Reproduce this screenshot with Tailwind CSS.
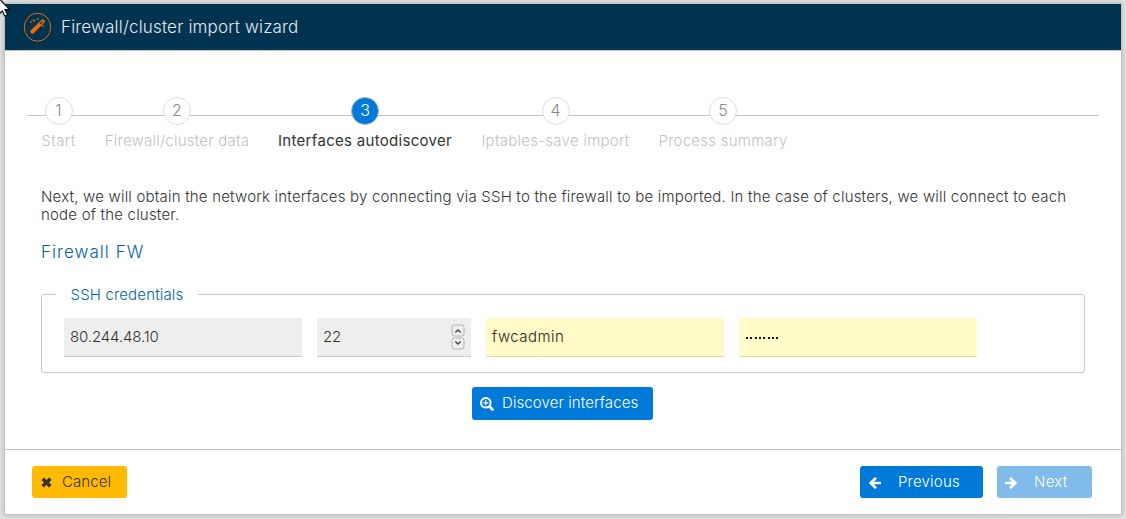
<!DOCTYPE html>
<html lang="en">
<head>
<meta charset="utf-8">
<title>Firewall/cluster import wizard</title>
<script src="https://cdn.jsdelivr.net/npm/@tailwindcss/browser@4"></script>
</head>
<body class="h-[519px] overflow-hidden bg-[#e2e2e2] pt-[3px] pl-1 font-['Inter',sans-serif] text-[15px] text-[#333]">
<div class="flex h-[512px] w-[1118px] flex-col border border-[#c2c2c2] bg-white shadow-[0_0_6px_rgba(0,0,0,0.2)]">
  <header class="flex h-[47px] shrink-0 items-center border-b border-[#c5c5c5] bg-[#003350] pl-[18px]">
    <svg class="h-[30px] w-[30px] shrink-0" viewBox="0 0 30 30" fill="none">
      <ellipse cx="14.5" cy="15.2" rx="13.2" ry="14" stroke="#e26b0c" stroke-width="1"/>
      <path d="M9.3 19.7 19.8 9.4" stroke="#ef6c00" stroke-width="4" stroke-linecap="round"/>
      <path d="m17 12 2.7-2.6" stroke="#003350" stroke-width="1.3"/>
      <path d="M11 7v3M9.5 8.5h3M14.8 6v2M13.8 7h2M8 9v2M7 10h2M20 13v2M19 14h2" stroke="#e26b0c" stroke-width=".8"/>
    </svg>
    <h1 class="ml-2 whitespace-nowrap text-[17px] leading-5 font-light tracking-[0.18px] text-[#e4e9ee]">Firewall/cluster import wizard</h1>
  </header>

  <main class="flex h-[398px] shrink-0 flex-col">
    <ol class="mx-[22px] mt-[46px] grid h-[56px] shrink-0 grid-cols-[35px_144px_174px_149px_128px] gap-x-[29px] bg-[linear-gradient(#c4c4c4,#c4c4c4)] bg-[length:100%_1px] bg-[position:0_18px] bg-no-repeat pl-[14px] text-[#c2c2c2]">
      <li class="flex flex-col items-center"><span class="flex h-7 w-7 items-center justify-center rounded-full border border-[#dedede] bg-white/90 pb-[2px] text-base font-light text-[#888]">1</span><span class="mt-[6px] whitespace-nowrap leading-5 font-light tracking-[0.4px]">Start</span></li>
      <li class="flex flex-col items-center"><span class="flex h-7 w-7 items-center justify-center rounded-full border border-[#dedede] bg-white/90 pb-[2px] text-base font-light text-[#888]">2</span><span class="mt-[6px] whitespace-nowrap leading-5 font-light tracking-[0.22px]">Firewall/cluster data</span></li>
      <li class="flex flex-col items-center"><span class="flex h-7 w-7 items-center justify-center rounded-full border border-[#a5b5c2] bg-[#007ad9] pb-[2px] text-base font-light text-white">3</span><span class="mt-[6px] whitespace-nowrap leading-5 tracking-[0.3px] text-[#333]">Interfaces autodiscover</span></li>
      <li class="flex flex-col items-center"><span class="flex h-7 w-7 items-center justify-center rounded-full border border-[#dedede] bg-white/90 pb-[2px] text-base font-light text-[#888]">4</span><span class="mt-[6px] whitespace-nowrap leading-5 font-light tracking-[0.27px]">Iptables-save import</span></li>
      <li class="flex flex-col items-center"><span class="flex h-7 w-7 items-center justify-center rounded-full border border-[#dedede] bg-white/90 pb-[2px] text-base font-light text-[#888]">5</span><span class="mt-[6px] whitespace-nowrap leading-5 font-light tracking-[0.25px]">Process summary</span></li>
    </ol>

    <p class="mt-[35px] ml-9 whitespace-nowrap leading-[18px] font-light tracking-[0.2px]">Next, we will obtain the network interfaces by connecting via SSH to the firewall to be imported. In the case of clusters, we will connect to each<br>node of the cluster.</p>
    <h2 class="mt-[18px] ml-9 text-[17px] leading-5 font-light tracking-[1.05px] text-[#00659f]">Firewall FW</h2>

    <fieldset class="mt-[23px] mr-9 ml-9 h-[88px] shrink-0 rounded-[3px] border border-[#c8c8c8] pl-[22px]">
      <legend class="-ml-2 h-[18px] px-[14.5px] pt-px leading-[18px] font-light tracking-[0.16px] text-[#00659f]">SSH credentials</legend>
      <div class="mt-[15px] flex gap-[15px] font-light">
        <div class="flex h-[39px] w-[238px] items-center border-b border-[#cacaca] bg-[#eee] pl-[6px] tracking-[-0.13px]">80.244.48.10</div>
        <div class="flex h-[39px] w-[154px] items-center justify-between border-b border-[#cacaca] bg-[#eee] pr-[6px] pl-[6px] tracking-[-0.3px]">22
          <svg class="h-[26px] w-[14px]" viewBox="0 0 14 26" fill="none">
            <rect x="1" y="1" width="12" height="11" rx="2.5" stroke="#b4b4b4"/>
            <rect x="1" y="14" width="12" height="11" rx="2.5" stroke="#b4b4b4"/>
            <path d="m4.3 8.5 2.7-2.5 2.7 2.5M4.3 17.5 7 20l2.7-2.5" stroke="#444" stroke-width="1.4"/>
          </svg>
        </div>
        <div class="flex h-[39px] w-[238px] items-center border-b border-[#ecd9a2] bg-[#fffbc8] pl-[6px] tracking-[0.45px] text-[#332211]">fwcadmin</div>
        <div class="flex h-[39px] w-[238px] items-center gap-[2.35px] border-b border-[#ecd9a2] bg-[#fffbc8] pt-px pl-[7px]">
          <i class="h-[2px] w-[2px] bg-[#221100]"></i><i class="h-[2px] w-[2px] bg-[#221100]"></i><i class="h-[2px] w-[2px] bg-[#221100]"></i><i class="h-[2px] w-[2px] bg-[#221100]"></i><i class="h-[2px] w-[2px] bg-[#221100]"></i><i class="h-[2px] w-[2px] bg-[#221100]"></i><i class="h-[2px] w-[2px] bg-[#221100]"></i><i class="h-[2px] w-[2px] bg-[#221100]"></i>
        </div>
      </div>
    </fieldset>

    <button class="mt-[14px] ml-[467px] flex h-[33px] w-[181px] shrink-0 items-center rounded-[3px] bg-[#007ad9] pl-2 font-light text-white">
      <svg class="h-[14px] w-[14px] shrink-0" viewBox="0 0 14 14" fill="none" stroke="#fff"><circle cx="5.8" cy="5.8" r="4.8" stroke-width="2"/><path d="m9.8 9.8 2.6 2.6" stroke-width="2.8" stroke-linecap="round"/><path d="M5.8 3.3v5M3.3 5.8h5" stroke-width="1.2"/></svg>
      <span class="ml-2 whitespace-nowrap tracking-[0.1px]">Discover interfaces</span>
    </button>
  </main>

  <footer class="flex h-[65px] items-center border-t border-[#c5c5c5] pr-[29px] pl-[27px] font-light">
    <button class="flex h-8 w-[95px] items-center rounded-[3px] bg-[#ffba01] pl-[8.5px]">
      <svg class="mt-px h-[11px] w-[11px]" viewBox="0 0 10 10"><path d="m1.5 1.5 7 7M8.5 1.5l-7 7" stroke="#333" stroke-width="3.2"/></svg>
      <span class="ml-[10.5px] tracking-[0.1px]">Cancel</span>
    </button>
    <button class="ml-auto flex h-8 w-[123px] items-center rounded-[3px] bg-[#007ad9] pl-[9px] text-white">
      <svg class="mt-px h-3 w-3" viewBox="0 0 12 12" fill="none"><path d="M7 .9 1.7 6 7 11.1M2 6h10" stroke="#fff" stroke-width="2.7"/></svg>
      <span class="ml-[17px] tracking-[0.2px]">Previous</span>
    </button>
    <button class="ml-[14px] flex h-8 w-[95px] items-center rounded-[3px] bg-[#80bbea] pl-2 text-white">
      <svg class="mt-px h-3 w-3" viewBox="0 0 12 12" fill="none"><path d="M5 .9 10.3 6 5 11.1M10 6H0" stroke="#fff" stroke-width="2.7"/></svg>
      <span class="ml-[17px] tracking-[0.3px]">Next</span>
    </button>
  </footer>
</div>
<svg class="absolute top-0 left-0 h-[18px] w-3" viewBox="0 0 12 18"><path d="M-3-4 9.5 9.6H5l2.6 5.1-2.8 1.3-2.5-5L-1 14Z" fill="#fff" stroke="#111" stroke-width="1.2"/></svg>
</body>
</html>
